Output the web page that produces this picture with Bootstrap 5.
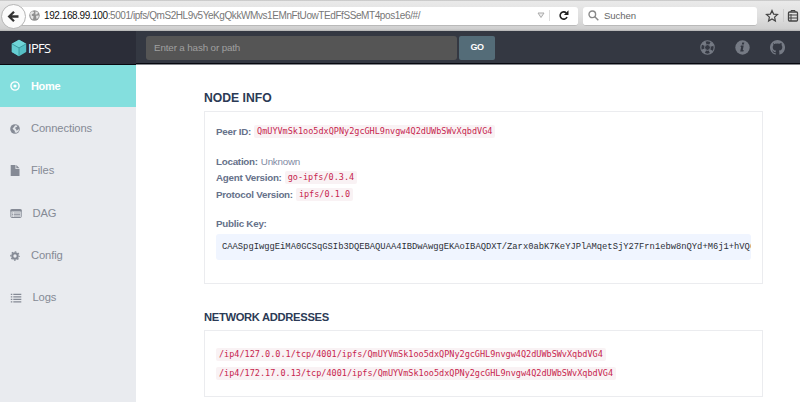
<!DOCTYPE html>
<html lang="en">
<head>
<meta charset="utf-8">
<title>IPFS</title>
<meta name="viewport" content="width=device-width, initial-scale=1">
<link href="https://cdn.jsdelivr.net/npm/bootstrap@5.3.0/dist/css/bootstrap.min.css" rel="stylesheet">
<style>
body{font-family:"Liberation Sans",Arial,sans-serif;font-size:10px;line-height:15px;background:#fff;height:402px;overflow:hidden;color:#7f8ba3}
svg{display:block;flex:none}
.chrome{height:31px;background:linear-gradient(#bdbdbd 0,#e9e9e9 1.5px,#e0e0e0 16px,#cfcfcf 29px,#b4b4b4 31px);padding-top:1px;padding-left:1px}
.back-btn{width:25px;height:25px;border-radius:50%;background:#fbfbfb;border:1px solid #b5b5b5;flex:none;z-index:1}
.url{height:19px;width:556px;margin-left:-4px;background:#fff;border-radius:0 3px 3px 0;border-bottom:1px solid #b9b9b9;padding-left:7px;color:#777;white-space:nowrap}
.url-text{width:376px;margin-left:4px;font-size:10px;letter-spacing:-.42px}
.url-text b{font-weight:400;color:#111}
.find{height:19px;width:174px;margin-left:5px;background:#fff;border-radius:3px;border-bottom:1px solid #b9b9b9;padding-left:5px;color:#666;font-size:9.6px;letter-spacing:-.1px;gap:5px}
.topbar{height:34px;background:#343842;border-bottom:1px solid #85878c;box-shadow:inset 0 -1px #07080f}
.brand{width:136px;height:34px;background:#2b2d38;box-shadow:inset 0 -1px #07080f;padding-left:11px;color:#fff;font:13px "Open Sans",sans-serif;letter-spacing:-.7px;gap:1px}
.hash{width:311px;height:24px;margin-left:10px;background:#555;border-radius:3px;color:#a0a0a0;padding-left:8px;font-size:9.8px;letter-spacing:-.13px}
.go{width:36px;height:24px;margin-left:2px;background:#546c78;color:#fff;border-radius:2px;font-size:9px;font-weight:700;letter-spacing:-.5px}
.tools{color:#757a84;margin-left:205px;gap:20px}
.side{width:135.5px;height:337px;background:#e9ebef;color:#858a95;font-size:11.2px;letter-spacing:-.1px}
.side .item{height:42.35px;padding-left:10px}
.side .item.on{background:#84dfde;color:#fff;font-weight:700;font-size:11px;letter-spacing:-.35px}
.side .item span{margin-left:11px}
.side .item svg[width="12"]+span{margin-left:10.5px}
.main{width:559px;margin-left:68.5px;padding-top:25px}
h2{font-size:12.2px;font-weight:700;line-height:16px;color:#2b3a55;margin:0 0 5px}
.net-title{font-size:11.2px;letter-spacing:-.31px;margin-top:25px}
.panel{border:1px solid #ebecef;padding:11px}
.panel code{font:8.5px/13px "DejaVu Sans Mono",monospace;letter-spacing:0;color:#c7254e;background:#f9f2f4;border-radius:2px;padding:0 3px;height:13px}
.info{height:173px;padding-top:11px}
.line{height:16.5px;gap:3px;font-size:9.8px;letter-spacing:-.25px}
.line strong{color:#66718a}
.gap-below{margin-bottom:13.5px}
.gap-above{margin-top:13px}
.key{height:26px;background:#f0f5ff;border-radius:3px;padding:0 0 0 6px;margin:2px 0 0;font:8.8px/26px "Liberation Mono",monospace;color:#2d3038;overflow:hidden}
.nets{height:67px;padding-top:17px}
.nets code{margin-bottom:6px}
</style>
</head>
<body>
<div class="chrome d-flex align-items-center">
 <div class="back-btn d-flex align-items-center justify-content-center"><svg width="13" height="13" viewBox="0 0 13 13" fill="none" stroke="#333" stroke-width="2.3"><path d="M7 1.8 2.2 6.5 7 11.2M2.5 6.5h9"/></svg></div>
 <div class="url d-flex align-items-center">
  <svg width="11" height="11" viewBox="0 0 11 11"><circle cx="5.5" cy="5.5" r="5.2" fill="#909090"/><path d="M1 3.5 3 1.3l2.2.6-.7 1.6-1.7.8v1.5l1.8.5-.3 2L3.3 9.500 1.700 7.500zM6.500 1.200l2.600 1.300-.8 1.800-2 .2zM7 5.800l3-.4-.8 2.500-1.700 1z" fill="#e4e4e4"/></svg>
  <div class="url-text"><b>192.168.99.100</b>:5001/ipfs/QmS2HL9v5YeKgQkkWMvs1EMnFtUowTEdFfSSeMT4pos1e6/#/</div>
  <svg class="ms-auto me-1" width="8" height="7" viewBox="0 0 8 7" fill="#eee" stroke="#aaa"><path d="M1 1h6L4 5.500z"/></svg>
  <svg width="29" height="13" viewBox="0 0 29 13" fill="none"><path d="M.5 1v11" stroke="#ddd"/><path d="M17.300 4A3.600 3.600 0 1 0 18 8" stroke="#222" stroke-width="1.600"/><path d="M19.500 1.300v4.600h-4.600z" fill="#222"/></svg>
 </div>
 <div class="find d-flex align-items-center"><svg width="11" height="11" viewBox="0 0 11 11" fill="none" stroke="#888" stroke-width="1.400"><circle cx="4.300" cy="4.300" r="3.300"/><path d="m6.800 6.800 3.500 3.500"/></svg><span>Suchen</span></div>
 <svg width="42" height="14" viewBox="0 0 42 14" fill="none" stroke="#444"><path d="m15 1.500 1.600 3.600 3.900.4-2.900 2.600.8 3.900-3.400-2-3.400 2 .8-3.900-2.900-2.600 3.900-.4z" stroke-width="1.200"/><path d="M26.500 0v13" stroke="#ccc"/><rect x="31.500" y="3" width="9" height="9" rx="1" stroke-width="1.300"/><path d="M34 3V1.500h4V3M31 6h10M31 9h10M34 5v7" /></svg>
</div>
<div class="topbar d-flex align-items-center">
 <div class="brand d-flex align-items-center">
  <svg width="16" height="18" viewBox="0 0 16 18"><path d="M8 .7 15.200 4.800v8.200L8 17.200.8 13V4.800z" fill="#55bfc5"/><path d="M8 .7 15.200 4.800 8 8.900.8 4.800z" fill="#70d5d8"/><path d="M.8 4.800 8 8.900v8.300L.8 13z" fill="#65cdd2"/><path d="M1 4.900 8 8.900l7-4M8 8.900v8" fill="none" stroke="#348f96" stroke-width=".8"/></svg><span>IPFS</span>
 </div>
 <div class="hash d-flex align-items-center">Enter a hash or path</div>
 <div class="go d-flex align-items-center justify-content-center">GO</div>
 <div class="tools d-flex">
  <svg width="15" height="15" viewBox="0 0 15 15" fill="none" stroke="currentColor"><circle cx="7.500" cy="7.500" r="6.700" stroke-width="1.100"/><circle cx="7.500" cy="7.500" r="2.900" stroke-width="1"/><circle cx="7.500" cy="7.500" r="4.800" stroke-width="3.300" stroke-dasharray="3.770 3.770" stroke-dashoffset="1.885" transform="rotate(45 7.500 7.500)"/></svg>
  <svg width="15" height="15" viewBox="0 0 15 15"><circle cx="7.500" cy="7.500" r="7.200" fill="currentColor"/><path d="M7.200 2.600h2.100l-.4 1.900H6.800zM5.900 5.600h2.800L7.800 10h.9l-.3 1.500H5.200L6.200 7h-.7z" fill="#343842"/></svg>
  <svg width="15" height="15" viewBox="0 0 16 16" fill="currentColor"><path d="M8 0a8 8 0 0 0-2.530 15.590c.4.070.55-.17.55-.38v-1.490C3.780 14.200 3.310 12.780 3.310 12.780c-.36-.92-.89-1.170-.89-1.170-.73-.5.060-.49.060-.49.800.06 1.230.83 1.230.83.710 1.230 1.870.87 2.330.66.070-.52.280-.87.510-1.070C4.770 11.340 2.900 10.650 2.900 7.580c0-.88.310-1.590.82-2.150-.08-.2-.36-1.020.08-2.120 0 0 .67-.21 2.200.82a7.600 7.600 0 0 1 4 0c1.530-1.040 2.200-.82 2.200-.82.440 1.100.160 1.920.080 2.120.510.560.820 1.270.820 2.150 0 3.070-1.870 3.750-3.650 3.950.29.250.54.730.54 1.480v2.200c0 .21.150.460.550.380A8 8 0 0 0 8 0z"/></svg>
 </div>
</div>
<div class="d-flex">
 <nav class="side">
  <div class="item on d-flex align-items-center"><svg width="10" height="10" viewBox="0 0 10 10"><circle cx="5" cy="5" r="4.100" fill="none" stroke="currentColor" stroke-width="1.400"/><circle cx="5" cy="5" r="1.600" fill="currentColor"/></svg><span>Home</span></div>
  <div class="item d-flex align-items-center"><svg width="10" height="10" viewBox="0 0 10 10"><circle cx="5" cy="5" r="4.800" fill="currentColor"/><path d="M5.200 1.300 7.600 1.800 6.700 3 5.600 3.200 4.900 4.400l1.300.4-.1 1.400 1.100.4 1.100-1.400.7.2-.4 1.900-1.900 1.500-2-.2.200-1.500-1.400-1.300-1-1.300 1.300-1.200z" fill="#e2e5e9"/></svg><span>Connections</span></div>
  <div class="item d-flex align-items-center"><svg width="10" height="11" viewBox="0 0 10 11" fill="currentColor"><path d="M.7 0h4.800v4h4v7H.7zM6.300 0l3.200 3.200H6.300z"/></svg><span>Files</span></div>
  <div class="item d-flex align-items-center"><svg width="12" height="9" viewBox="0 0 12 9"><rect x=".9" y=".5" width="10.300" height="8" rx=".7" fill="none" stroke="currentColor"/><path d="M.5.500h11v2H.5z" fill="currentColor"/><path d="M2 4h1.300M2 5.500h1.300M2 7h1.300M4 4h6M4 5.500h6M4 7h6" stroke="currentColor" stroke-width=".8"/></svg><span>DAG</span></div>
  <div class="item d-flex align-items-center"><svg width="10" height="10" viewBox="0 0 10 10" fill="none" stroke="currentColor"><circle cx="5" cy="5" r="2.700" stroke-width="2"/><circle cx="5" cy="5" r="4.200" stroke-width="1.200" stroke-dasharray="1.650 1.650" stroke-dashoffset=".82"/></svg><span>Config</span></div>
  <div class="item d-flex align-items-center"><svg width="12" height="10" viewBox="0 0 12 10" stroke="currentColor" stroke-width="1.300"><path d="M.8 1.300h1.500M.8 3.800h1.500M.8 6.300h1.500M.8 8.800h1.500M3.300 1.300h8M3.300 3.800h8M3.300 6.300h8M3.300 8.800h8"/></svg><span>Logs</span></div>
 </nav>
 <main class="main">
  <h2>NODE INFO</h2>
  <section class="panel info">
   <div class="line gap-below d-flex align-items-center"><strong>Peer ID:</strong><code>QmUYVmSk1oo5dxQPNy2gcGHL9nvgw4Q2dUWbSWvXqbdVG4</code></div>
   <div class="line d-flex align-items-center"><strong>Location:</strong><span>Unknown</span></div>
   <div class="line d-flex align-items-center"><strong>Agent Version:</strong><code>go-ipfs/0.3.4</code></div>
   <div class="line d-flex align-items-center"><strong>Protocol Version:</strong><code>ipfs/0.1.0</code></div>
   <div class="line gap-above d-flex align-items-center"><strong>Public Key:</strong></div>
   <pre class="key">CAASpgIwggEiMA0GCSqGSIb3DQEBAQUAA4IBDwAwggEKAoIBAQDXT/Zarx0abK7KeYJPlAMqetSjY27Frn1ebw8nQYd+M6j1+hVQ6</pre>
  </section>
  <h2 class="net-title">NETWORK ADDRESSES</h2>
  <section class="panel nets d-flex flex-column align-items-start">
   <code>/ip4/127.0.0.1/tcp/4001/ipfs/QmUYVmSk1oo5dxQPNy2gcGHL9nvgw4Q2dUWbSWvXqbdVG4</code>
   <code>/ip4/172.17.0.13/tcp/4001/ipfs/QmUYVmSk1oo5dxQPNy2gcGHL9nvgw4Q2dUWbSWvXqbdVG4</code>
  </section>
 </main>
</div>
<script src="https://cdn.jsdelivr.net/npm/bootstrap@5.3.0/dist/js/bootstrap.bundle.min.js"></script>
</body>
</html>
